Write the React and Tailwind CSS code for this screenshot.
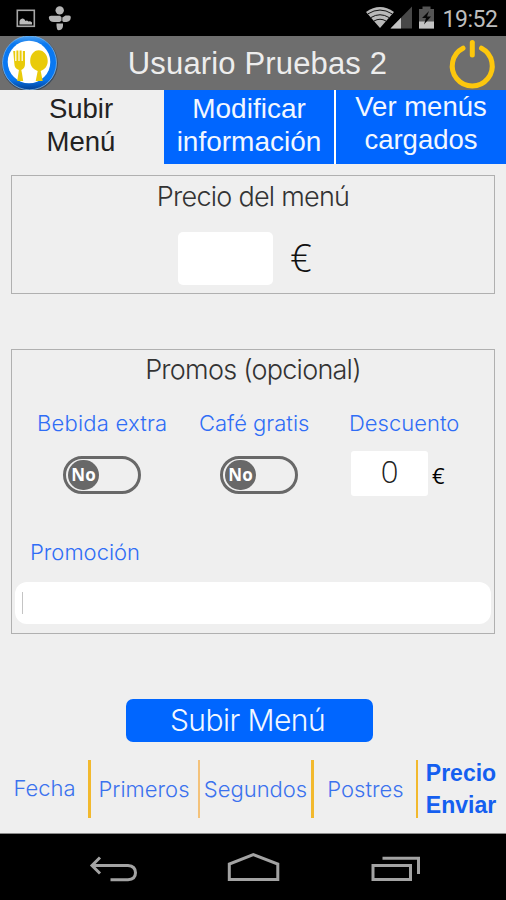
const tabs = [
  { lines: ["Subir", "Menú"], active: true },
  { lines: ["Modificar", "información"] },
  { lines: ["Ver menús", "cargados"] },
];

function StatusBar() {
  return (
    <div className="flex h-9 shrink-0 items-center bg-black">
      <svg width="506" height="36" viewBox="0 0 506 36">
        {/* picture */}
        <rect x="17.3" y="10.3" width="17" height="16" fill="none" stroke="#a6a6a6" strokeWidth="1.6" />
        <path d="M19.500 24.500v-3.500q1-3 3.500-2.500 2 .5 2.500 2.500 1.500-1 3 .500 2-1 3.500 1v2z" fill="#bcbcbc" />
        {/* joined pieces */}
        <g fill="#b4b4b4">
          <circle cx="59.700" cy="10.400" r="4.200" />
          <path d="M48.800 17.500q0-2 2.700-1.800h8.500l1.500 1.500v3.500l-2 1.300h-5.500q-4.700 0-5.200-4.500z" />
          <path d="M62.300 17.500l3.200-2h3.500q2 0 1.800 2.300-.500 4-4.300 4.200h-3l-1.200-1z" />
          <path d="M56.500 23.500h6.500v2.500q-.500 4.300-4.700 4.300-2-.300-1.800-6.800z" />
        </g>
        {/* wifi */}
        <path d="M366 12q14-10 28 0L380 28z" fill="#b9b9b9" />
        <g fill="none" stroke="#000" strokeWidth="0.900">
          <path d="M368 13.800q12-7.500 24 0" />
          <path d="M371 17.500q9-5.500 18 0" />
          <path d="M374 21q6-3.500 12 0" />
        </g>
        {/* signal */}
        <path d="M390.500 28.500L412 6.500v22z" fill="#484848" />
        <path d="M390.500 28.500L401 17.700v10.800z" fill="#c4c4c4" />
        {/* battery */}
        <path d="M419 9h3.500V6.500h8V9h3.500v19.500h-15z" fill="#555" />
        <path d="M419 21.500h15v7h-15z" fill="#c4c4c4" />
        <path d="M429 11l-7 7h4l-2 6.500 7-8h-4z" fill="#080808" />
        <text x="442.500" y="26.500" fontSize="23" textLength="55.500" fill="#bdbdbd" className="font-['Roboto',sans-serif] font-normal">
          19:52
        </text>
      </svg>
    </div>
  );
}

function Logo() {
  return (
    <svg width="60" height="54" viewBox="0 0 60 54">
      <defs>
        <linearGradient id="ring" x1="0" y1="0" x2="0" y2="1">
          <stop offset="0" stopColor="#4fa3f2" />
          <stop offset="0.150" stopColor="#0a78f0" />
          <stop offset="0.800" stopColor="#0878f2" />
          <stop offset="1" stopColor="#033f91" />
        </linearGradient>
      </defs>
      <circle cx="29.800" cy="27.500" r="28" fill="#3c4b5c" />
      <circle cx="29.500" cy="26.800" r="27" fill="url(#ring)" stroke="#8bc2f2" strokeWidth="0.700" />
      <circle cx="29" cy="26" r="21.300" fill="#fff" />
      <g fill="#e9cb0b">
        <path d="M13.200 15h2v10h1.200v-10.500h2v10.500h1.200v-10.500h2v10.500h1.200v-10h2.200v13q0 4.500-3.700 6l.700 3.500 1.200 7.500h-6l1.200-7.500.500-3.500q-4.500-1.500-4.500-6z" />
        <path d="M38.700 14.300c5.200 0 9 5 9 10.700 0 5.300-3 8.500-7 10l.600 3 1.400 7h-7l1.400-7 .600-3c-4.200-1.500-7.500-4.700-7.500-10 0-5.700 3.300-10.700 8.500-10.700z" />
      </g>
    </svg>
  );
}

function Header() {
  return (
    <header className="flex h-[54px] shrink-0 items-center bg-[#6e6e6e] font-['Liberation_Sans',sans-serif] font-normal">
      <Logo />
      <h1 className="flex-1 pl-[9px] text-center text-[31px] leading-[55px] tracking-[0.005em] text-[#ededed]">Usuario Pruebas 2</h1>
      <svg width="60" height="54" viewBox="446 36 60 54" fill="none" stroke="#fdc70d" strokeWidth="5" strokeLinecap="round">
        <path d="M463 48.200a20 20 0 1 0 18.500 0" />
        <path d="M472.300 42.500v12.500" />
      </svg>
    </header>
  );
}

function Tabs() {
  return (
    <nav className="grid h-[74px] shrink-0 grid-cols-[164px_170px_170px] bg-white text-center font-['Liberation_Sans',sans-serif] text-[28px] leading-[33px] font-normal">
      {tabs.map((tab, i) => (
        <div
          key={tab.lines[0]}
          className={
            tab.active
              ? "bg-[#efefef] pt-[2px] pr-[2px] text-[27.500px] text-[#222]"
              : i === 1
                ? "bg-[#0066ff] pt-[2px] text-[#f2f7ff]"
                : "ml-[2px] w-[170px] bg-[#0066ff] text-[27.500px] text-[#f2f7ff]"
          }
        >
          {tab.lines.map((line) => (
            <p key={line}>{line}</p>
          ))}
        </div>
      ))}
    </nav>
  );
}

function Toggle() {
  return (
    <div className="flex h-[38px] w-[78px] items-center rounded-full border-3 border-[#686868] pl-[2px]">
      <span className="flex h-[30px] w-[31px] items-center justify-center rounded-full bg-[#686868] font-['Open_Sans',sans-serif] text-[17px] leading-none font-bold text-white">
        No
      </span>
    </div>
  );
}

function PriceCard() {
  return (
    <section className="mx-[11px] mt-[11px] h-[119px] shrink-0 border border-[#b0b0b0]">
      <h2 className="pt-[4px] text-center text-[27px] leading-[33px] tracking-[-0.028em] text-[#333]">Precio del menú</h2>
      <div className="mt-[19px] flex pl-[166px]">
        <div className="h-[53px] w-[95px] rounded-[5px] bg-white" />
        <span className="pl-[17px] font-['Open_Sans',sans-serif] text-[38px] leading-[50px] font-light text-[#111]">€</span>
      </div>
    </section>
  );
}

function PromoCard() {
  return (
    <section className="mx-[11px] mt-[55px] h-[285px] shrink-0 border border-[#b0b0b0]">
      <h2 className="pt-[3px] text-center text-[27px] leading-[33px] tracking-[-0.028em] text-[#333]">Promos (opcional)</h2>
      <div className="mt-[22px] flex h-[30px] text-[22px] leading-[30px] text-[#2f6df6]">
        <span className="w-[161px] pl-[25px] tracking-[0.010em]">Bebida extra</span>
        <span className="w-[151px] pl-[26px]">Café gratis</span>
        <span className="pl-[25px]">Descuento</span>
      </div>
      <div className="mt-[13px] flex h-[45px] items-center pl-[51px]">
        <div className="flex gap-[79px] pt-[2px]">
          <Toggle />
          <Toggle />
        </div>
        <div className="ml-[53px] h-[45px] w-[77px] rounded-[3px] bg-white text-center font-['Open_Sans',sans-serif] text-[31px] leading-[40px] text-[#222]">
          0
        </div>
        <span className="pt-[4px] pl-[4px] font-['Open_Sans',sans-serif] text-[22px] font-medium text-black">€</span>
      </div>
      <p className="mt-[41px] pl-[18px] text-[22px] leading-[30px] text-[#2f6df6]">Promoción</p>
      <div className="mx-[3px] mt-[15px] flex h-[42px] items-center rounded-xl bg-white pl-[7px]">
        <span className="h-[22px] w-px bg-[#c4c4c4]" />
      </div>
    </section>
  );
}

function Steps() {
  return (
    <div className="mt-[18px] flex h-[58px] shrink-0 items-center text-[22px] leading-[32px] text-[#3b72ee]">
      <span className="w-[88px] pb-[3px] pl-px text-center">Fecha</span>
      <i className="h-full w-[2.500px] bg-[#f2b92e]" />
      <span className="w-[107px] pb-px text-center">Primeros</span>
      <i className="h-full w-[2.500px] bg-[#f4c27a]" />
      <span className="w-[111px] pb-px text-center">Segundos</span>
      <i className="h-full w-[2.500px] bg-[#f2b92e]" />
      <span className="w-[102px] pb-px pl-[2px] text-center">Postres</span>
      <i className="h-full w-[2.500px] bg-[#f2b92e]" />
      <span className="flex-1 pr-[2px] pb-px text-center font-['Liberation_Sans',sans-serif] text-[23px] font-bold text-[#155ff0]">
        Precio
        <br />
        Enviar
      </span>
    </div>
  );
}

function NavBar() {
  return (
    <footer className="mt-auto h-[67px] shrink-0 border-t border-[#8a8a8a] bg-black">
      <svg width="506" height="66" viewBox="0 834 506 66" fill="none" stroke="#a3a3a3" strokeWidth="3">
        <path d="M110.500 879.700h17.500q7.500-.5 7.500-7t-7.500-7.200H92.500M100 857.500l-8 8 8 8" />
        <path d="M229.300 879.500V864l24-9.500 24.500 9.500v15.500z" />
        <path d="M373 865.500h37.500v14H373zM382.500 858.300h36V874" />
      </svg>
    </footer>
  );
}

export default function App() {
  return (
    <main className="flex h-[900px] w-[506px] flex-col overflow-hidden bg-[#efefef] font-['Inter',sans-serif] font-light">
      <StatusBar />
      <Header />
      <Tabs />
      <PriceCard />
      <PromoCard />
      <button className="mt-[65px] ml-[126px] h-[43px] w-[247px] shrink-0 rounded-[7px] bg-[#0066ff] pr-[4px] text-[30px] leading-[43px] tracking-[-0.018em] text-[#f2f7ff]">
        Subir Menú
      </button>
      <Steps />
      <NavBar />
    </main>
  );
}
